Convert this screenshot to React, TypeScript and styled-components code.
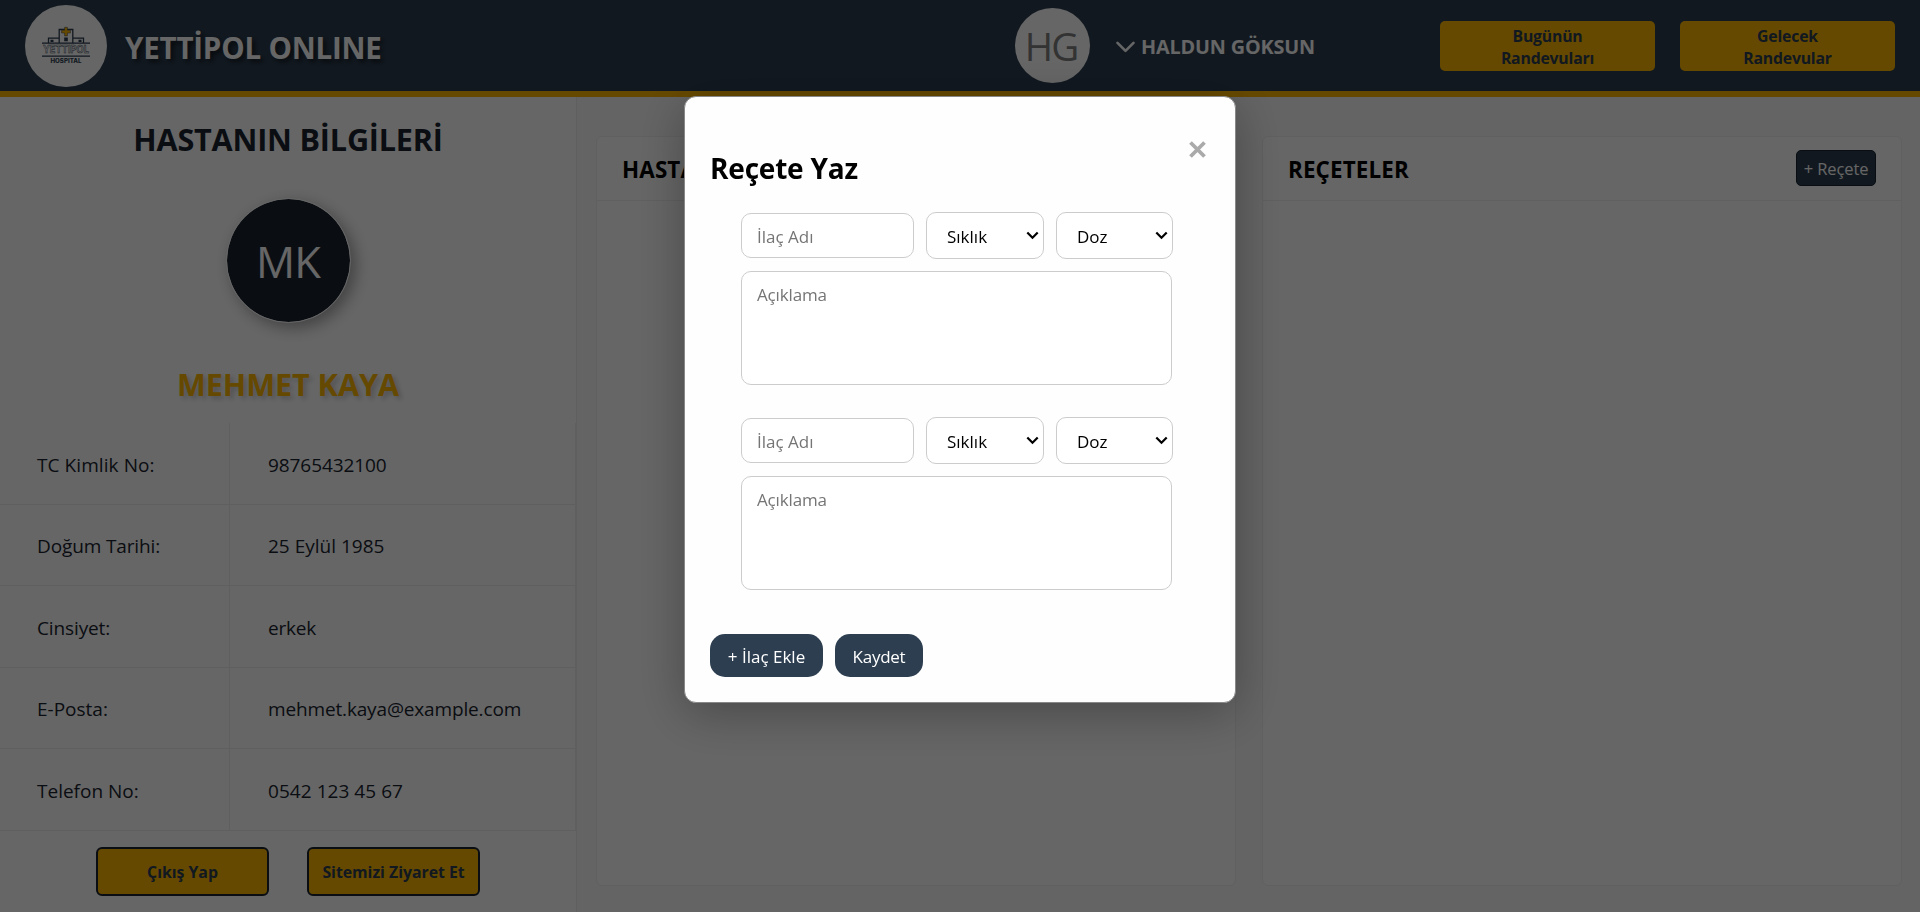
import React from "react";
import styled, { createGlobalStyle } from "styled-components";

const NAVY = "#2c3e50";
const INK = "#1a252f";
const GOLD = "#ffb700";
const LINE = "#eeeeee";

const GlobalStyle = createGlobalStyle`
  *, *::before, *::after { box-sizing: border-box; }
  body {
    margin: 0;
    font-family: "Segoe UI", "Open Sans", "Noto Sans", sans-serif;
    background: #fff;
    overflow: hidden;
  }
  button, input, select, textarea { font-family: inherit; }
  h1, h2, h3, p { margin: 0; }
`;

const Page = styled.div`
  display: flex;
  flex-direction: column;
  height: 912px;
`;

const Header = styled.header`
  display: flex;
  align-items: center;
  justify-content: space-between;
  height: 97px;
  padding: 0 25px;
  background: ${NAVY};
  border-bottom: 6px solid ${GOLD};
`;

const Brand = styled.div`
  display: flex;
  align-items: center;
  gap: 18px;
`;

const LogoCircle = styled.div`
  width: 82px;
  height: 82px;
  border-radius: 50%;
  background: #fff;
  overflow: hidden;
`;

const BrandName = styled.h1`
  font-size: 29.5px;
  line-height: 40px;
  font-weight: 700;
  letter-spacing: -0.2px;
  white-space: nowrap;
  color: #fff;
  padding-top: 4px;
  text-shadow: 3px 3px 5px rgba(0, 0, 0, 0.6);
`;

const HeaderRight = styled.div`
  display: flex;
  align-items: center;
`;

const DoctorAvatar = styled.div`
  display: flex;
  align-items: center;
  justify-content: center;
  width: 75px;
  height: 75px;
  border-radius: 50%;
  background: #fff;
  color: #808080;
  font-size: 38.5px;
  font-weight: 400;
  letter-spacing: -2px;
  line-height: 1;
  padding: 2px 3px 0 0;
`;

const Doctor = styled.div`
  display: flex;
  align-items: center;
  gap: 6px;
  width: 324px;
  margin-left: 26px;
  padding-top: 2px;
  color: #fff;
  font-size: 19.8px;
  font-weight: 700;
  letter-spacing: -0.15px;
  line-height: 28px;
  white-space: nowrap;
`;

const HeaderActions = styled.div`
  display: flex;
  gap: 25px;
`;

const HeaderButton = styled.button`
  width: 215px;
  height: 50px;
  padding: 2px 50px 0;
  border: 0;
  border-radius: 5px;
  background: ${GOLD};
  color: ${NAVY};
  font-size: 15.8px;
  font-weight: 700;
  line-height: 22px;
  letter-spacing: -0.2px;
`;

const Body = styled.div`
  display: flex;
  flex: 1;
  min-height: 0;
`;

const Sidebar = styled.aside`
  display: flex;
  flex-direction: column;
  align-items: center;
  width: 577px;
  border-right: 1px solid ${LINE};
  background: #fff;
`;

const SideTitle = styled.h2`
  margin-top: 21px;
  font-size: 30.6px;
  line-height: 42px;
  letter-spacing: -0.2px;
  color: ${INK};
`;

const PatientAvatar = styled.div`
  display: flex;
  align-items: center;
  justify-content: center;
  width: 125px;
  height: 125px;
  margin-top: 38px;
  border-radius: 50%;
  border: 1px solid #fff;
  background: ${INK};
  background-clip: padding-box;
  color: #fff;
  font-size: 43.5px;
  letter-spacing: -1px;
  line-height: 1;
  padding-top: 2px;
  box-shadow: 5px 5px 15px rgba(0, 0, 0, 0.35);
`;

const PatientName = styled.h2`
  margin-top: 40px;
  font-size: 30.6px;
  line-height: 42px;
  letter-spacing: -0.05px;
  color: ${GOLD};
  text-shadow: 3px 3px 5px rgba(0, 0, 0, 0.2);
`;

const InfoTable = styled.dl`
  display: grid;
  grid-template-columns: 230px 346px;
  grid-auto-rows: 81.5px;
  width: 100%;
  margin: 18px 0 0;
`;

const InfoCell = styled.div<{ $track: number }>`
  display: flex;
  align-items: center;
  margin: 0;
  padding-left: 38px;
  padding-top: 3px;
  border-right: 1px solid ${LINE};
  border-bottom: 1px solid ${LINE};
  color: ${INK};
  font-size: 19px;
  letter-spacing: ${(p) => p.$track}px;
  white-space: nowrap;
`;

const InfoLabel = styled(InfoCell)`
  padding-left: 37px;
`;

const SideActions = styled.div`
  display: flex;
  gap: 38px;
  margin-top: 16px;
`;

const SideButton = styled.button`
  width: 173px;
  height: 49px;
  padding: 1px 0 0;
  border: 2px solid ${INK};
  border-radius: 6px;
  background: ${GOLD};
  color: ${NAVY};
  font-size: 15.9px;
  font-weight: 700;
  letter-spacing: -0.05px;
  white-space: nowrap;
`;

const Content = styled.main`
  display: flex;
  flex: 1;
  gap: 26px;
  padding: 39px 18px 26px 19px;
  background: #fafafa;
`;

const Panel = styled.section`
  flex: 1;
  border: 1px solid #f0f0f0;
  border-radius: 6px;
  background: #fff;
`;

const PanelHead = styled.div`
  display: flex;
  align-items: center;
  justify-content: space-between;
  height: 64px;
  padding: 0 25px;
  border-bottom: 1px solid #f0f0f0;
`;

const PanelTitle = styled.h3`
  font-size: 22.4px;
  line-height: 30px;
  letter-spacing: 0.15px;
  padding-top: 2px;
  color: #000;
`;

const AddButton = styled.button`
  width: 80px;
  height: 36px;
  margin-bottom: 1px;
  padding: 1px 0 0;
  border: 1px solid ${INK};
  border-radius: 5px;
  background: ${NAVY};
  color: #fff;
  font-size: 16.5px;
  letter-spacing: -0.1px;
  white-space: nowrap;
`;

const Overlay = styled.div`
  position: fixed;
  inset: 0;
  display: flex;
  align-items: flex-start;
  justify-content: center;
  padding-top: 96px;
  background: rgba(0, 0, 0, 0.6);
`;

const Modal = styled.div`
  display: flex;
  flex-direction: column;
  width: 552px;
  height: 607px;
  padding: 39px 25px 25px;
  border: 1px solid #888;
  border-radius: 12px;
  background: #fefefe;
  box-shadow: 0 10px 50px rgba(0, 0, 0, 0.3);
`;

const ModalHead = styled.div`
  display: flex;
  justify-content: space-between;
  align-items: flex-start;
  height: 76px;
`;

const ModalTitle = styled.h2`
  margin-top: 11px;
  font-size: 28px;
  line-height: 42px;
  letter-spacing: -0.2px;
  color: #000;
`;

const CloseButton = styled.button`
  display: flex;
  margin: 5px 4px 0 0;
  padding: 0;
  border: 0;
  background: none;
  color: #aaa;
`;

const Medicine = styled.div`
  display: flex;
  flex-direction: column;
  height: 205px;
  padding: 0 36px 0 31px;
`;

const FieldRow = styled.div`
  display: flex;
  align-items: center;
  gap: 12px;
  height: 47px;
  width: 432px;
`;

const NameInput = styled.input`
  width: 173px;
  height: 45px;
  padding: 1px 15px 0;
  border: 1px solid #ccc;
  border-radius: 10px;
  background: #fff;
  font-size: 17px;
  letter-spacing: 0;
  &::placeholder { color: #757575; }
`;

const ChoiceWrap = styled.div<{ $w: number }>`
  position: relative;
  flex: none;
  width: ${(p) => p.$w}px;
  height: 47px;
`;

const Choice = styled.select`
  appearance: none;
  width: 100%;
  height: 47px;
  padding: 1px 0 0 20px;
  border: 1px solid #ccc;
  border-radius: 10px;
  background-color: #fff;
  color: #000;
  font-size: 17px;
  letter-spacing: 0;
`;

const Chevron = styled.svg`
  position: absolute;
  top: 19px;
  right: 5px;
  pointer-events: none;
`;

const Notes = styled.textarea`
  width: 431px;
  height: 114px;
  margin-top: 12px;
  padding: 11px 15px;
  border: 1px solid #ccc;
  border-radius: 10px;
  background: #fff;
  font-size: 17px;
  line-height: 23px;
  letter-spacing: -0.15px;
  resize: none;
  &::placeholder { color: #757575; }
`;

const ModalActions = styled.div`
  display: flex;
  gap: 12px;
  margin-top: 12px;
`;

const ModalButton = styled.button<{ $w: number; $track: number }>`
  width: ${(p) => p.$w}px;
  height: 43px;
  padding: 1px 0 0;
  border: 0;
  border-radius: 15px;
  background: ${NAVY};
  color: #fff;
  font-size: 17px;
  letter-spacing: ${(p) => p.$track}px;
  white-space: nowrap;
`;

const HospitalLogo = () => (
  <svg width="82" height="82" viewBox="0 0 82 82" fill="none">
    <g stroke={NAVY} strokeWidth="1.3">
      <path d="M17 38.2h48M17 51.2h48" />
      <path d="M23.500 38v-4.800h10.500M58.500 38v-4.800H48" />
      <path d="M34.200 38V24.500h13.600V38" />
    </g>
    <path d="M25.500 34.800h3v2.200h-3zM53.500 34.800h3v2.200h-3zM39.200 32.600h3.600v3.600h-3.600z" fill={NAVY} />
    <path d="M39.600 22.300h2.800v2.900h3v2.800h-3v2.900h-2.800v-2.900h-3v-2.800h3z" fill={GOLD} stroke={NAVY} strokeWidth="0.500" />
    <text x="41" y="48" textAnchor="middle" textLength="46" lengthAdjust="spacingAndGlyphs" fontFamily="Inter, sans-serif" fontWeight="700" fontSize="9.800" fill="#fff" stroke={NAVY} strokeWidth="0.450">YETTIPOL</text>
    <text x="41" y="57.600" textAnchor="middle" textLength="31" lengthAdjust="spacingAndGlyphs" fontFamily="Inter, sans-serif" fontWeight="800" fontSize="5.600" fill={NAVY}>HOSPITAL</text>
  </svg>
);

type InfoRow = { label: string; value: string; labelTrack: number; valueTrack: number };

const info: InfoRow[] = [
  { label: "TC Kimlik No:", value: "98765432100", labelTrack: 0.08, valueTrack: -0.08 },
  { label: "Doğum Tarihi:", value: "25 Eylül 1985", labelTrack: -0.13, valueTrack: 0 },
  { label: "Cinsiyet:", value: "erkek", labelTrack: -0.12, valueTrack: -0.2 },
  { label: "E-Posta:", value: "mehmet.kaya@example.com", labelTrack: 0, valueTrack: -0.15 },
  { label: "Telefon No:", value: "0542 123 45 67", labelTrack: 0, valueTrack: 0.05 },
];

const Select = ({ label, width }: { label: string; width: number }) => (
  <ChoiceWrap $w={width}>
    <Choice><option>{label}</option></Choice>
    <Chevron width="13" height="9" viewBox="0 0 13 9" fill="none" stroke="#000" strokeWidth="2.200">
      <path d="M1.300 1.500l5.200 5.200 5.200-5.200" />
    </Chevron>
  </ChoiceWrap>
);

const MedicineForm = () => (
  <Medicine>
    <FieldRow>
      <NameInput placeholder="İlaç Adı" />
      <Select label="Sıklık" width={118} />
      <Select label="Doz" width={117} />
    </FieldRow>
    <Notes placeholder="Açıklama" />
  </Medicine>
);

export default function App() {
  return (
    <>
      <GlobalStyle />
      <Page>
        <Header>
          <Brand>
            <LogoCircle><HospitalLogo /></LogoCircle>
            <BrandName>YETTİPOL ONLINE</BrandName>
          </Brand>
          <HeaderRight>
            <DoctorAvatar>HG</DoctorAvatar>
            <Doctor>
              <svg width="19" height="12" viewBox="0 0 19 12" fill="none" stroke="currentColor" strokeWidth="2.600" strokeLinecap="round" strokeLinejoin="round">
                <path d="M1.500 1.800l8 8 8-8" />
              </svg>
              HALDUN GÖKSUN
            </Doctor>
            <HeaderActions>
              <HeaderButton>Bugünün Randevuları</HeaderButton>
              <HeaderButton>Gelecek Randevular</HeaderButton>
            </HeaderActions>
          </HeaderRight>
        </Header>
        <Body>
          <Sidebar>
            <SideTitle>HASTANIN BİLGİLERİ</SideTitle>
            <PatientAvatar>MK</PatientAvatar>
            <PatientName>MEHMET KAYA</PatientName>
            <InfoTable>
              {info.map((row) => (
                <React.Fragment key={row.label}>
                  <InfoLabel as="dt" $track={row.labelTrack}>{row.label}</InfoLabel>
                  <InfoCell as="dd" $track={row.valueTrack}>{row.value}</InfoCell>
                </React.Fragment>
              ))}
            </InfoTable>
            <SideActions>
              <SideButton>Çıkış Yap</SideButton>
              <SideButton>Sitemizi Ziyaret Et</SideButton>
            </SideActions>
          </Sidebar>
          <Content>
            <Panel>
              <PanelHead><PanelTitle>HASTA</PanelTitle></PanelHead>
            </Panel>
            <Panel>
              <PanelHead>
                <PanelTitle>REÇETELER</PanelTitle>
                <AddButton>+ Reçete</AddButton>
              </PanelHead>
            </Panel>
          </Content>
        </Body>
      </Page>
      <Overlay>
        <Modal>
          <ModalHead>
            <ModalTitle>Reçete Yaz</ModalTitle>
            <CloseButton aria-label="Kapat">
              <svg width="17" height="17" viewBox="0 0 17 17" stroke="currentColor" strokeWidth="3.800">
                <path d="M1.500 1.500l14 14M15.500 1.500l-14 14" />
              </svg>
            </CloseButton>
          </ModalHead>
          <MedicineForm />
          <MedicineForm />
          <ModalActions>
            <ModalButton $w={113} $track={0}>+ İlaç Ekle</ModalButton>
            <ModalButton $w={88} $track={-0.25}>Kaydet</ModalButton>
          </ModalActions>
        </Modal>
      </Overlay>
    </>
  );
}
